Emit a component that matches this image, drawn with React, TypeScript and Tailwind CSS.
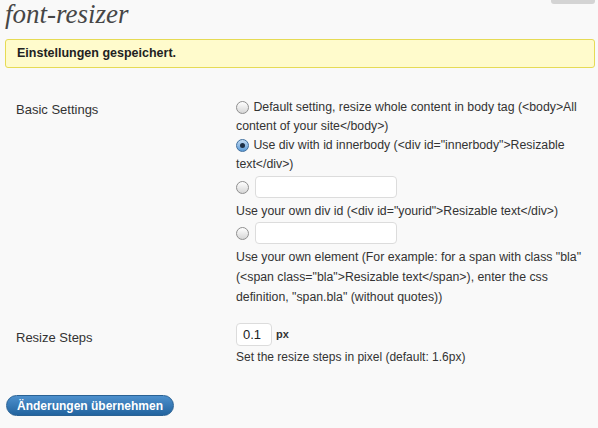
import React from "react";

function Radio({ checked = false }: { checked?: boolean }) {
  return (
    <span
      className={
        "inline-flex h-[13px] w-[13px] items-center justify-center rounded-full border align-middle " +
        (checked
          ? "border-[#3f6f9f] bg-gradient-to-b from-[#c4dcf3] to-[#5a9ad6]"
          : "border-[#8f8f8f] bg-gradient-to-b from-[#ffffff] to-[#d6d6d6]")
      }
    >
      {checked && <span className="h-[5px] w-[5px] rounded-full bg-[#1c2f45]" />}
    </span>
  );
}

function TextBox({ width, value }: { width: string; value?: string }) {
  return (
    <span
      className={
        "inline-flex h-[22px] items-center rounded-[4px] border border-[#dcdcdc] bg-white pl-[6px] align-middle text-[12px] text-[#333] " +
        width
      }
    >
      {value}
    </span>
  );
}

export default function App() {
  return (
    <div
      className="relative min-h-[428px] w-[598px] bg-[#f9f9f9] pl-[5px] pr-[3px] text-[#333]"
      style={{ fontFamily: '"Liberation Sans", Arial, sans-serif' }}
    >
      <div className="absolute right-[3px] top-0 h-[4px] w-[44px] rounded-b-[3px] bg-[#d4d4d4]" />

      <h2
        className="mb-[11px] text-[27px] italic leading-[28px] text-[#464646]"
        style={{ fontFamily: '"Liberation Serif", "Times New Roman", serif' }}
      >
        font-resizer
      </h2>

      <div className="flex h-[29px] items-center rounded-[3px] border border-[#e6db55] bg-[#fffbcc] pl-[11px]">
        <p className="text-[12.5px] font-bold text-[#222]">Einstellungen gespeichert.</p>
      </div>

      <div className="mt-[30px] flex">
        <div className="w-[231px] shrink-0 pl-[11px] pt-[2px] text-[13px] leading-[19px]">
          Basic Settings
        </div>
        <div className="text-[12.3px] leading-[19px]">
          <div>
            <Radio /> <span className="ml-[1px]">{"Default setting, resize whole content in body tag (<body>All"}</span>
            <br />
            {"content of your site</body>)"}
          </div>
          <div>
            <Radio checked /> <span className="ml-[1px]">{'Use div with id innerbody (<div id="innerbody">Resizable'}</span>
            <br />
            {"text</div>)"}
          </div>
          <div className="mt-[2px] flex items-center gap-[6px]">
            <Radio />
            <TextBox width="w-[142px]" />
          </div>
          <div className="mt-[4px]">{'Use your own div id (<div id="yourid">Resizable text</div>)'}</div>
          <div className="mt-[1px] flex items-center gap-[6px]">
            <Radio />
            <TextBox width="w-[142px]" />
          </div>
          <div className="mt-[3px] leading-[20px]">
            {'Use your own element (For example: for a span with class "bla"'}
            <br />
            {'(<span class="bla">Resizable text</span>), enter the css'}
            <br />
            {'definition, "span.bla" (without quotes))'}
          </div>
        </div>
      </div>

      <div className="mt-[16px] flex">
        <div className="w-[231px] shrink-0 pl-[11px] pt-[5px] text-[13px] leading-[19px]">
          Resize Steps
        </div>
        <div className="text-[12px] leading-[19px]">
          <div className="flex items-center">
            <span className="inline-flex h-[23px] w-[36px] items-center rounded-[4px] border border-[#dcdcdc] bg-white pl-[6px] text-[13px] text-[#222]">
              0.1
            </span>
            <span className="ml-[4px] text-[11px] font-bold">px</span>
          </div>
          <div className="mt-[2px]">Set the resize steps in pixel (default: 1.6px)</div>
        </div>
      </div>

      <button className="ml-[1px] mt-[28px] flex h-[21px] w-[168px] items-center justify-center rounded-full border border-[#2a6294] bg-gradient-to-b from-[#4d90cd] to-[#22649f] text-[12px] font-bold text-white">
        Änderungen übernehmen
      </button>
    </div>
  );
}
